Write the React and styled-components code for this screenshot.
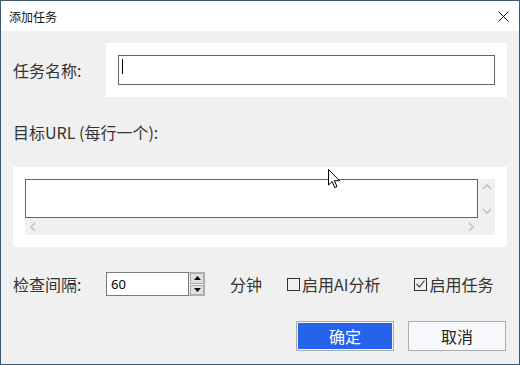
import React from 'react';
import styled, { createGlobalStyle } from 'styled-components';

const Global = createGlobalStyle`
  html, body { margin: 0; padding: 0; background: #ffffff; }
  * { box-sizing: border-box; }
`;

const Window = styled.div`
  position: relative;
  width: 520px;
  height: 365px;
  border: 1px solid #3d5871;
  background: #f0f0f0;
  display: flex;
  flex-direction: column;
  font-family: "Noto Sans CJK SC", "Noto Sans", sans-serif;
  color: #333;
  overflow: hidden;
`;

const TitleBar = styled.div`
  height: 30px;
  background: #ffffff;
  display: flex;
  align-items: center;
  justify-content: space-between;
  padding: 0 10px 0 8px;
  font-size: 12px;
  color: #111;
`;

const Body = styled.div`
  flex: 1;
  display: flex;
  flex-direction: column;
  padding: 12px 12px 0 12px;
`;

const Row = styled.div`
  display: flex;
  align-items: center;
  height: ${p => p.h || 'auto'};
  margin-top: ${p => p.mt || '0px'};
`;

const Label = styled.div`
  font-size: 16px;
  width: ${p => p.w || 'auto'};
  flex: none;
  line-height: 18px;
`;

const Panel = styled.div`
  background: #ffffff;
  padding: 12px;
  flex: none;
  width: ${p => p.w || 'auto'};
`;

const TextBox = styled.div`
  height: 30px;
  border: 1px solid #646464;
  background: #fff;
  position: relative;
`;

const Caret = styled.span`
  position: absolute;
  left: 3px;
  top: 3px;
  width: 1px;
  height: 15px;
  background: #000;
`;

const ScrollArea = styled.div`
  display: grid;
  grid-template-columns: 453px 17px;
  grid-template-rows: 39px 17px;
  background: #f0f0f0;
`;

const MultiBox = styled.div`
  border: 1px solid #646464;
  background: #fff;
`;

const ScrollBar = styled.div`
  display: flex;
  flex-direction: ${p => (p.vertical ? 'column' : 'row')};
  justify-content: space-between;
  align-items: center;
  padding: ${p => (p.vertical ? '4px 0 3px' : '0 3px 0 4px')};
`;

const Spin = styled.div`
  display: flex;
  width: 99px;
  height: 24px;
  border: 1px solid #adadad;
  margin-left: 10px;
`;

const SpinText = styled.div`
  flex: 1;
  border: 1px solid #7a7a7a;
  margin: -1px 0 -1px -1px;
  background: #fff;
  font-family: "Noto Sans", sans-serif;
  font-size: 13px;
  color: #000;
  display: flex;
  align-items: center;
  padding-left: 4px;
`;

const SpinButtons = styled.div`
  width: 15px;
  display: flex;
  flex-direction: column;
  gap: 1px;
  padding: 0 0 0 1px;
`;

const SpinButton = styled.div`
  flex: 1;
  border: 1px solid #adadad;
  background: #e1e1e1;
  display: flex;
  align-items: center;
  justify-content: center;
`;

const Unit = styled.div`
  font-size: 16px;
  margin-left: 25px;
`;

const Check = styled.label`
  display: flex;
  align-items: center;
  font-size: 16px;
  margin-left: ${p => p.ml};
`;

const Box = styled.span`
  width: 13px;
  height: 13px;
  border: 1px solid #333;
  margin-right: 2px;
  display: flex;
  align-items: center;
  justify-content: center;
`;

const Buttons = styled.div`
  display: flex;
  justify-content: flex-end;
  gap: 14px;
  margin-top: 25px;
  padding-right: 1px;
`;

const Button = styled.div`
  width: 98px;
  height: 30px;
  border: 1px solid #adadad;
  padding: 1px;
  background: ${p => (p.primary ? '#f0f0f0' : '#f6f8fb')};
  font-size: 16px;
  color: ${p => (p.primary ? '#fff' : '#222')};
  display: flex;

  & > span {
    flex: 1;
    display: flex;
    align-items: center;
    justify-content: center;
    background: ${p => (p.primary ? '#2563eb' : '#f6f8fb')};
  }
`;

const Cursor = styled.svg`
  position: absolute;
  left: 327px;
  top: 168px;
`;

const Chevron = ({ dir }) => {
  const pts = {
    up: '1,6 5,2 9,6',
    down: '1,2 5,6 9,2',
    left: '6,1 2,5 6,9',
    right: '2,1 6,5 2,9',
  }[dir];
  const vert = dir === 'up' || dir === 'down';
  return (
    <svg width={vert ? 10 : 8} height={vert ? 8 : 10} viewBox={vert ? '0 0 10 8' : '0 0 8 10'}>
      <polyline points={pts} fill="none" stroke="#c2c2c2" strokeWidth="1.6" />
    </svg>
  );
};

export default function App() {
  return (
    <>
      <Global />
      <Window>
        <TitleBar>
          <span>添加任务</span>
          <svg width="11" height="11" viewBox="0 0 11 11">
            <path d="M0.5 0.5 L10.5 10.5 M10.5 0.5 L0.5 10.5" stroke="#111" strokeWidth="1" />
          </svg>
        </TitleBar>
        <Body>
          <Row>
            <Label w="93px">任务名称:</Label>
            <Panel w="401px">
              <TextBox>
                <Caret />
              </TextBox>
            </Panel>
          </Row>
          <Row h="70px">
            <Label>目标URL (每行一个):</Label>
          </Row>
          <Panel w="494px">
            <ScrollArea>
              <MultiBox />
              <ScrollBar vertical>
                <Chevron dir="up" />
                <Chevron dir="down" />
              </ScrollBar>
              <ScrollBar>
                <Chevron dir="left" />
                <Chevron dir="right" />
              </ScrollBar>
              <div />
            </ScrollArea>
          </Panel>
          <Row h="24px" mt="25px">
            <Label w="83px">检查间隔:</Label>
            <Spin>
              <SpinText>60</SpinText>
              <SpinButtons>
                <SpinButton>
                  <svg width="7" height="4" viewBox="0 0 7 4"><path d="M0 4 L3.5 0 L7 4 Z" fill="#000" /></svg>
                </SpinButton>
                <SpinButton>
                  <svg width="7" height="4" viewBox="0 0 7 4"><path d="M0 0 L3.5 4 L7 0 Z" fill="#000" /></svg>
                </SpinButton>
              </SpinButtons>
            </Spin>
            <Unit>分钟</Unit>
            <Check ml="25px">
              <Box />
              启用AI分析
            </Check>
            <Check ml="34px">
              <Box>
                <svg width="9" height="8" viewBox="0 0 9 8">
                  <polyline points="0.5,4 3.5,7 8.5,0.5" fill="none" stroke="#333" strokeWidth="1.1" />
                </svg>
              </Box>
              启用任务
            </Check>
          </Row>
          <Buttons>
            <Button primary><span>确定</span></Button>
            <Button><span>取消</span></Button>
          </Buttons>
        </Body>
        <Cursor width="13" height="20" viewBox="0 0 13 20">
          <path d="M0.5 0.5 L0.5 16 L4.2 12.5 L6.8 18.6 L9 17.6 L6.5 11.7 L11.5 11.7 Z" fill="#fff" stroke="#000" strokeWidth="1" strokeLinejoin="miter" />
        </Cursor>
      </Window>
    </>
  );
}
